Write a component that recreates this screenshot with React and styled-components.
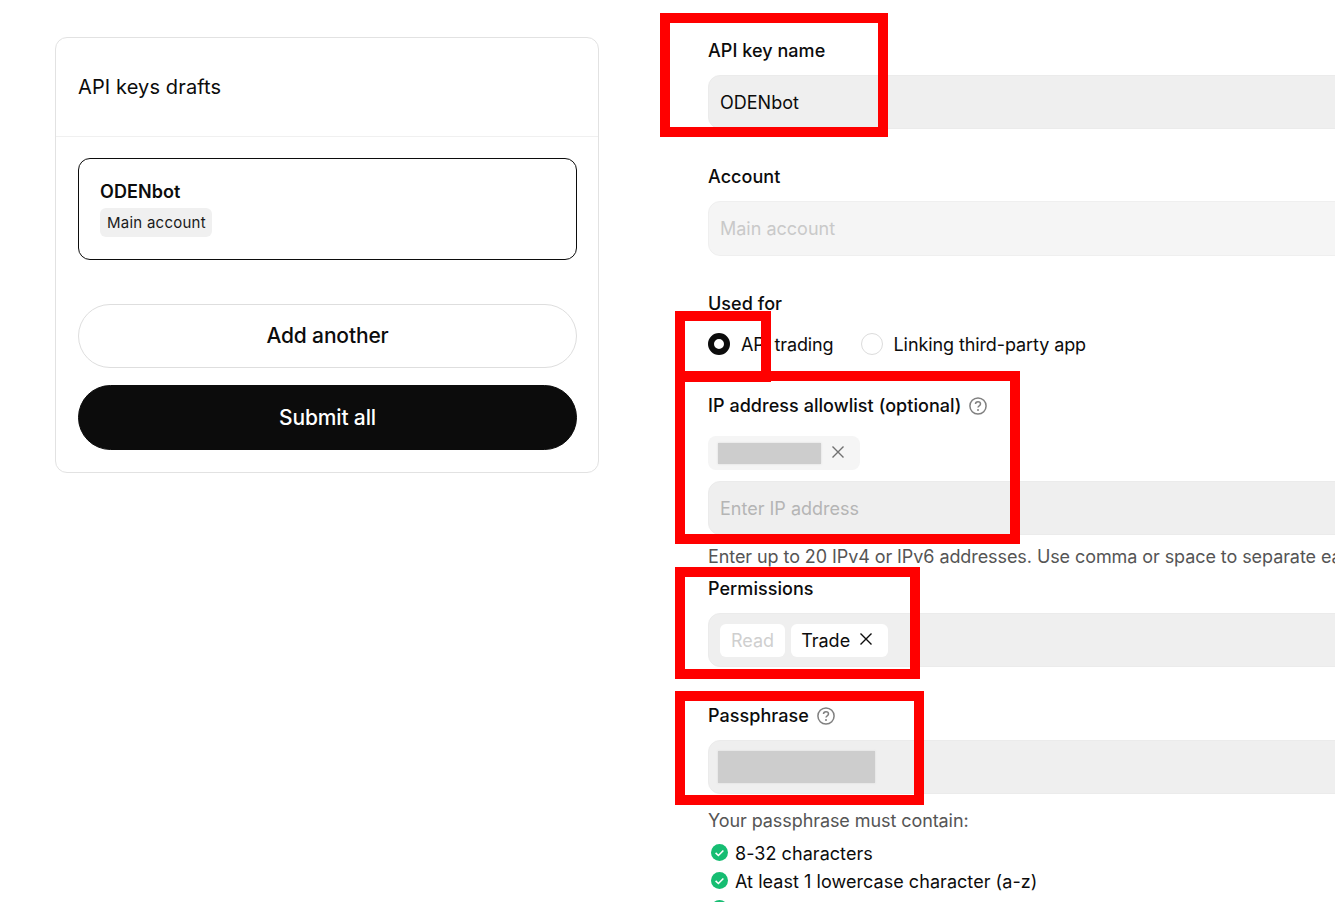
import React from "react";
import styled, { createGlobalStyle } from "styled-components";

const Global = createGlobalStyle`
  html, body { margin: 0; padding: 0; background: #fff; }
  body { font-family: Inter, "Liberation Sans", sans-serif; color: #0c0c0c; overflow: hidden; }
`;

const Page = styled.div`
  position: relative;
  width: 1335px;
  height: 902px;
  overflow: hidden;
  display: flex;
  align-items: flex-start;
`;

const Sidebar = styled.aside`
  box-sizing: border-box;
  width: 544px;
  height: 436px;
  margin: 37px 0 0 55px;
  border: 1px solid #e2e2e2;
  border-radius: 12px;
  flex: none;
`;

const SidebarHead = styled.div`
  height: 98px;
  padding: 0 22px;
  display: flex;
  align-items: center;
  border-bottom: 1px solid #f0f0f0;
  font-size: 20px;
  letter-spacing: 0.12px;
`;

const SidebarBody = styled.div`
  padding: 21px 21px 0 22px;
  display: flex;
  flex-direction: column;
`;

const DraftCard = styled.div`
  box-sizing: border-box;
  height: 102px;
  border: 1px solid #0c0c0c;
  border-radius: 12px;
  padding: 21px 21px;
  margin-bottom: 44px;
`;

const DraftName = styled.div`
  font-size: 18px;
  line-height: 24px;
  font-weight: 600;
  letter-spacing: 0.08px;
`;

const DraftBadge = styled.span`
  display: inline-block;
  margin-top: 4px;
  padding: 0 6px 0 7px;
  height: 29px;
  line-height: 29px;
  border-radius: 6px;
  background: #f0f0f0;
  font-size: 15px;
  letter-spacing: 0.25px;
  color: #1a1a1a;
`;

const Pill = styled.button`
  box-sizing: border-box;
  width: 100%;
  height: ${(p) => (p.$solid ? "65px" : "64px")};
  margin-bottom: ${(p) => (p.$solid ? "0" : "17px")};
  padding: 0 0 ${(p) => (p.$solid ? "0" : "2px")};
  border-radius: 33px;
  border: 1px solid ${(p) => (p.$solid ? "#0c0c0c" : "#dedede")};
  background: ${(p) => (p.$solid ? "#0c0c0c" : "#fff")};
  color: ${(p) => (p.$solid ? "#fff" : "#0c0c0c")};
  font-family: inherit;
  font-size: 21px;
  font-weight: 500;
  letter-spacing: -0.15px;
`;

const Form = styled.main`
  width: 800px;
  margin-left: 109px;
  flex: none;
  padding-top: 38px;
`;

const Label = styled.div`
  box-sizing: border-box;
  display: flex;
  align-items: center;
  gap: 8px;
  height: 26px;
  padding-bottom: 2px;
  font-size: 18px;
  font-weight: 500;
  letter-spacing: 0.05px;
  margin-top: ${(p) => p.$top || 0}px;
  margin-bottom: ${(p) => p.$bottom ?? 11}px;
`;

const InputBox = styled.div`
  box-sizing: border-box;
  height: ${(p) => p.$h || 54}px;
  border: 1px solid ${(p) => (p.$disabled ? "#efefef" : "#ebebeb")};
  border-radius: 12px;
  background: ${(p) => (p.$disabled ? "#f5f5f5" : "#efefef")};
  display: flex;
  align-items: center;
  gap: 6px;
  padding: 0 ${(p) => p.$pad ?? 11}px;
  font-size: 18px;
  letter-spacing: 0;
  color: ${(p) => (p.$disabled ? "#c9c9c9" : p.$placeholder ? "#b5b5b5" : "#0c0c0c")};
`;

const Radios = styled.div`
  display: flex;
  align-items: center;
  height: 26px;
  margin-top: 14px;
  font-size: 18px;
  letter-spacing: -0.1px;
`;

const Radio = styled.span`
  box-sizing: border-box;
  flex: none;
  width: 22px;
  height: 22px;
  border-radius: 50%;
  margin-right: 11px;
  border: ${(p) => (p.$on ? "6px solid #0c0c0c" : "1px solid #dcdcdc")};
  background: #fff;
`;

const RadioText = styled.span`
  margin-right: 27px;
`;

const IpTag = styled.div`
  box-sizing: border-box;
  width: 152px;
  height: 34px;
  margin-bottom: 11px;
  border-radius: 8px;
  background: #f5f5f5;
  display: flex;
  align-items: center;
  gap: 10px;
  padding: 0 10px;
  color: #707070;
`;

const Redacted = styled.div`
  flex: none;
  width: ${(p) => p.$w}px;
  height: ${(p) => p.$h}px;
  background: #cdcdcd;
  box-shadow: 0 0 2px #d8d8d8;
`;

const Help = styled.div`
  height: 26px;
  line-height: 26px;
  margin-top: ${(p) => p.$top || 0}px;
  font-size: 18px;
  letter-spacing: -0.08px;
  color: #555;
  white-space: nowrap;
`;

const Chip = styled.span`
  height: 33px;
  border-radius: 6px;
  background: #fff;
  display: flex;
  align-items: center;
  gap: 9px;
  padding: 0 ${(p) => (p.$muted ? 11 : 15)}px 0 ${(p) => (p.$muted ? 11 : 10)}px;
  color: ${(p) => (p.$muted ? "#cfcfcf" : "#0c0c0c")};
`;

const Rules = styled.ul`
  list-style: none;
  margin: 5px 0 0;
  padding: 0;
`;

const Rule = styled.li`
  display: flex;
  align-items: center;
  gap: 7px;
  height: 28px;
  padding-left: 3px;
  font-size: 18px;
  letter-spacing: 0.05px;
  white-space: nowrap;
`;

const Mark = styled.div`
  position: absolute;
  box-sizing: border-box;
  border: 10px solid #ff0000;
  left: ${(p) => p.$x}px;
  top: ${(p) => p.$y}px;
  width: ${(p) => p.$w}px;
  height: ${(p) => p.$h}px;
  pointer-events: none;
`;

const Question = ({ color = "#808080" }) => (
  <svg width="18" height="18" viewBox="0 0 18 18" fill="none" style={{ marginTop: 2 }}>
    <circle cx="9" cy="9" r="8.1" stroke={color} strokeWidth="1.5" />
    <path d="M6.5 7.1c0-1.5 1.1-2.3 2.5-2.3s2.5.8 2.5 2.2c0 1.9-2.5 1.8-2.5 3.6" stroke={color} strokeWidth="1.5" />
    <circle cx="9" cy="13.1" r="1" fill={color} />
  </svg>
);

const Cross = ({ size = 14, color = "currentColor" }) => (
  <svg width={size} height={size} viewBox="0 0 14 14" fill="none" style={{ marginBottom: 2 }}>
    <path d="M1.5 1.5l11 11M12.5 1.5l-11 11" stroke={color} strokeWidth="1.4" />
  </svg>
);

const Check = () => (
  <svg width="17" height="17" viewBox="0 0 17 17" style={{ flex: "none", marginBottom: 2 }}>
    <circle cx="8.5" cy="8.5" r="8.5" fill="#16bd72" />
    <path d="M4.6 8.8l2.8 2.7 5-5" fill="none" stroke="#fff" strokeWidth="1.6" />
  </svg>
);

export default function App() {
  return (
    <Page>
      <Global />
      <Sidebar>
        <SidebarHead>API keys drafts</SidebarHead>
        <SidebarBody>
          <DraftCard>
            <DraftName>ODENbot</DraftName>
            <DraftBadge>Main account</DraftBadge>
          </DraftCard>
          <Pill>Add another</Pill>
          <Pill $solid>Submit all</Pill>
        </SidebarBody>
      </Sidebar>

      <Form>
        <Label>API key name</Label>
        <InputBox>ODENbot</InputBox>

        <Label $top={35}>Account</Label>
        <InputBox $disabled $h={55}>Main account</InputBox>

        <Label $top={35} $bottom={0}>Used for</Label>
        <Radios>
          <Radio $on />
          <RadioText>API trading</RadioText>
          <Radio />
          <RadioText>Linking third-party app</RadioText>
        </Radios>

        <Label $top={36} $bottom={17}>
          IP address allowlist (optional) <Question />
        </Label>
        <IpTag>
          <Redacted $w={103} $h={21} />
          <Cross color="#707070" />
        </IpTag>
        <InputBox $placeholder>Enter IP address</InputBox>
        <Help $top={9}>Enter up to 20 IPv4 or IPv6 addresses. Use comma or space to separate each address.</Help>

        <Label $top={6}>Permissions</Label>
        <InputBox>
          <Chip $muted>Read</Chip>
          <Chip>
            Trade <Cross />
          </Chip>
        </InputBox>

        <Label $top={36}>
          Passphrase <Question />
        </Label>
        <InputBox $pad={9}>
          <Redacted $w={157} $h={32} />
        </InputBox>
        <Help $top={14}>Your passphrase must contain:</Help>
        <Rules>
          <Rule><Check />8-32 characters</Rule>
          <Rule><Check />At least 1 lowercase character (a-z)</Rule>
          <Rule><Check />At least 1 uppercase character (A-Z)</Rule>
        </Rules>
      </Form>

      <Mark $x={660} $y={13} $w={228} $h={124} />
      <Mark $x={675} $y={311} $w={96} $h={71} />
      <Mark $x={675} $y={371} $w={345} $h={173} />
      <Mark $x={675} $y={567} $w={245} $h={112} />
      <Mark $x={675} $y={691} $w={249} $h={114} />
    </Page>
  );
}
